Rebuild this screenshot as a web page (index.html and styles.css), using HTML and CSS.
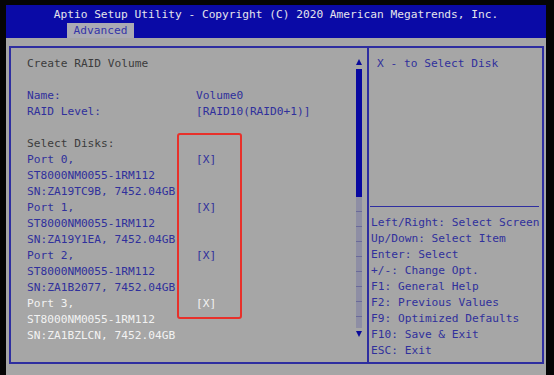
FILE: index.html
```html
<!DOCTYPE html>
<html lang="en">
<head>
    <meta charset="UTF-8">
    <meta name="viewport" content="width=device-width, initial-scale=1.0">
    <title>Aptio Setup Utility</title>
    <link rel="stylesheet" href="styles.css">
</head>
<body>
    <div class="screen">
        <!-- Header with title and tab -->
        <div class="header">
            <div class="title">Aptio Setup Utility - Copyright (C) 2020 American Megatrends, Inc.</div>
            <div class="tabs">
                <div class="tab">Advanced</div>
            </div>
        </div>

        <!-- Main area -->
        <div class="main">
            <div class="frame">
                <div class="left-pane">
                    <div class="content">
                        <div class="row"><span class="heading">Create RAID Volume</span></div>
                        <div class="row"></div>
                        <div class="row"><span class="label">Name:</span><span class="value">Volume0</span></div>
                        <div class="row"><span class="label">RAID Level:</span><span class="value">[RAID10(RAID0+1)]</span></div>
                        <div class="row"></div>
                        <div class="row"><span class="heading">Select Disks:</span></div>

                        <div class="row"><span class="label">Port 0,</span><span class="value">[X]</span></div>
                        <div class="row"><span class="label">ST8000NM0055-1RM112</span></div>
                        <div class="row"><span class="label">SN:ZA19TC9B, 7452.04GB</span></div>

                        <div class="row"><span class="label">Port 1,</span><span class="value">[X]</span></div>
                        <div class="row"><span class="label">ST8000NM0055-1RM112</span></div>
                        <div class="row"><span class="label">SN:ZA19Y1EA, 7452.04GB</span></div>

                        <div class="row"><span class="label">Port 2,</span><span class="value">[X]</span></div>
                        <div class="row"><span class="label">ST8000NM0055-1RM112</span></div>
                        <div class="row"><span class="label">SN:ZA1B2077, 7452.04GB</span></div>

                        <div class="row selected"><span class="label">Port 3,</span><span class="value">[X]</span></div>
                        <div class="row selected"><span class="label">ST8000NM0055-1RM112</span></div>
                        <div class="row selected"><span class="label">SN:ZA1BZLCN, 7452.04GB</span></div>
                    </div>

                    <!-- Scrollbar -->
                    <div class="scrollbar">
                        <div class="arrow-up"></div>
                        <div class="thumb"></div>
                        <div class="track"></div>
                        <div class="arrow-down"></div>
                    </div>
                </div>

                <div class="right-pane">
                    <div class="item-help">X - to Select Disk</div>
                    <div class="key-help">
                        <div>Left/Right: Select Screen</div>
                        <div>Up/Down: Select Item</div>
                        <div>Enter: Select</div>
                        <div>+/-: Change Opt.</div>
                        <div>F1: General Help</div>
                        <div>F2: Previous Values</div>
                        <div>F9: Optimized Defaults</div>
                        <div>F10: Save &amp; Exit</div>
                        <div>ESC: Exit</div>
                    </div>
                </div>
            </div>
        </div>

        <!-- Red annotation box over the disk selections -->
        <div class="highlight"></div>
    </div>
</body>
</html>
```

FILE: styles.css
```css
body {
    margin: 0;
    width: 554px;
    height: 375px;
    overflow: hidden;
    background-color: #050505;
    font-family: "DejaVu Sans Mono", "Liberation Mono", monospace;
    font-size: 11.2px;
}
.screen {
    position: relative;
    margin: 5px 0 0 6px;
    width: 540px;
    height: 370px;
    display: flex;
    flex-direction: column;
}
.header {
    background-color: #0a0aa6;
    height: 33px;
    display: flex;
    flex-direction: column;
}
.title {
    color: #e4e4ec;
    text-align: center;
    line-height: 16px;
    padding-top: 2px;
    height: 17px;
}
.tabs {
    display: flex;
    padding-left: 61px;
}
.tab {
    background-color: #ababb4;
    color: #3434a8;
    width: 67px;
    height: 16px;
    line-height: 16px;
    text-align: center;
}
.main {
    flex: 1;
    background-color: #a6a6a6;
    padding: 8px 3px 11px 3px;
    display: flex;
}
.frame {
    flex: 1;
    display: flex;
    border: 2px solid #2e2ea0;
}
.left-pane {
    width: 356px;
    display: flex;
}
.content {
    flex: 1;
    padding: 8px 0 0 16px;
}
.row {
    display: grid;
    grid-template-columns: 169px auto;
    height: 16px;
    line-height: 16px;
    white-space: nowrap;
    color: #30309c;
}
.heading {
    color: #3c3c3c;
}
.row.selected {
    color: #f2f2f2;
}
.scrollbar {
    width: 6px;
    margin: 11px 5px 25px 0;
    display: flex;
    flex-direction: column;
    align-items: center;
}
.arrow-up {
    width: 0;
    height: 0;
    border-left: 3px solid transparent;
    border-right: 3px solid transparent;
    border-bottom: 6px solid #0a0a9a;
    margin-bottom: 4px;
}
.thumb {
    width: 6px;
    height: 128px;
    background-color: #0808a0;
}
.track {
    width: 6px;
    flex: 1;
    background-color: #8e8ea4;
    background-image: repeating-linear-gradient(to bottom, transparent 0, transparent 14px, #6a6a9a 14px, #6a6a9a 15px);
}
.arrow-down {
    width: 0;
    height: 0;
    border-left: 3px solid transparent;
    border-right: 3px solid transparent;
    border-top: 6px solid #0a0a9a;
    margin-top: 3px;
}
.right-pane {
    flex: 1;
    border-left: 2px solid #2e2ea0;
    display: flex;
    flex-direction: column;
    color: #30309c;
    line-height: 16px;
}
.item-help {
    padding: 8px 0 0 8px;
    flex: 1;
}
.key-help {
    border-top: 1px solid #2e2ea0;
    margin: 0 3px 0 1px;
    padding: 8px 0 3px 1px;
    white-space: nowrap;
}
.highlight {
    position: absolute;
    left: 171px;
    top: 128px;
    width: 61px;
    height: 182px;
    border: 2.5px solid #e8302a;
    border-radius: 3px;
}
```
